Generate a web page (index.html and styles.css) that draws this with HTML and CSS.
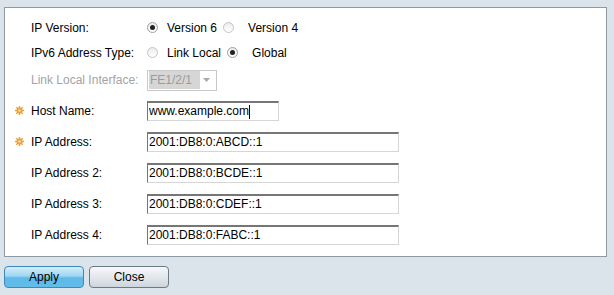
FILE: index.html
```html
<!DOCTYPE html>
<html lang="en">
<head>
    <meta charset="UTF-8">
    <meta name="viewport" content="width=device-width, initial-scale=1.0">
    <title>Add IPv6 DNS Host</title>
    <link rel="stylesheet" href="styles.css">
</head>
<body>
    <form class="panel">
        <div class="row row-short">
            <span class="mark"></span>
            <label class="label">IP Version:</label>
            <div class="control">
                <label class="opt"><input type="radio" name="ipver" checked> Version 6</label>
                <label class="opt"><input type="radio" name="ipver"> Version 4</label>
            </div>
        </div>
        <div class="row row-short">
            <span class="mark"></span>
            <label class="label">IPv6 Address Type:</label>
            <div class="control">
                <label class="opt"><input type="radio" name="addrtype"> Link Local</label>
                <label class="opt"><input type="radio" name="addrtype" checked> Global</label>
            </div>
        </div>
        <div class="row row-mid">
            <span class="mark"></span>
            <label class="label disabled">Link Local Interface:</label>
            <div class="control">
                <div class="select-box">
                    <span class="select-value">FE1/2/1</span>
                    <svg class="select-arrow" width="7" height="4" viewBox="0 0 7 4"><path d="M0 0 L7 0 L3.5 4 Z" fill="#a9a9a9"/></svg>
                </div>
            </div>
        </div>
        <div class="row">
            <span class="mark"><svg width="9" height="9" viewBox="0 0 9 9"><g fill="#eba035"><circle cx="4.5" cy="4.5" r="3"/><rect x="3.8" y="0" width="1.4" height="9"/><rect x="0" y="3.8" width="9" height="1.4"/><rect x="3.8" y="0" width="1.4" height="9" transform="rotate(45 4.5 4.5)"/><rect x="3.8" y="0" width="1.4" height="9" transform="rotate(-45 4.5 4.5)"/></g><circle cx="4.5" cy="4.5" r="1.3" fill="#fbe3b0"/></svg></span>
            <label class="label">Host Name:</label>
            <div class="control"><input class="field field-short" type="text" value="www.example.com"><span class="caret"></span></div>
        </div>
        <div class="row">
            <span class="mark"><svg width="9" height="9" viewBox="0 0 9 9"><g fill="#eba035"><circle cx="4.5" cy="4.5" r="3"/><rect x="3.8" y="0" width="1.4" height="9"/><rect x="0" y="3.8" width="9" height="1.4"/><rect x="3.8" y="0" width="1.4" height="9" transform="rotate(45 4.5 4.5)"/><rect x="3.8" y="0" width="1.4" height="9" transform="rotate(-45 4.5 4.5)"/></g><circle cx="4.5" cy="4.5" r="1.3" fill="#fbe3b0"/></svg></span>
            <label class="label">IP Address:</label>
            <div class="control"><input class="field" type="text" value="2001:DB8:0:ABCD::1"></div>
        </div>
        <div class="row">
            <span class="mark"></span>
            <label class="label">IP Address 2:</label>
            <div class="control"><input class="field" type="text" value="2001:DB8:0:BCDE::1"></div>
        </div>
        <div class="row">
            <span class="mark"></span>
            <label class="label">IP Address 3:</label>
            <div class="control"><input class="field" type="text" value="2001:DB8:0:CDEF::1"></div>
        </div>
        <div class="row">
            <span class="mark"></span>
            <label class="label">IP Address 4:</label>
            <div class="control"><input class="field" type="text" value="2001:DB8:0:FABC::1"></div>
        </div>
    </form>
    <div class="buttons">
        <button type="button" class="btn btn-apply">Apply</button>
        <button type="button" class="btn btn-close">Close</button>
    </div>
</body>
</html>
```

FILE: styles.css
```css
body {
    margin: 0;
    padding: 7px 7px 0 4px;
    background-color: #dbe3eb;
    font-family: "Liberation Sans", Arial, sans-serif;
    font-size: 12px;
    color: #000;
}
.panel {
    width: 601px;
    background-color: #fff;
    border: 1px solid #8f9ba4;
    padding: 7px 0 6px 0;
    box-sizing: content-box;
}
.row {
    display: grid;
    grid-template-columns: 26px 116px 1fr;
    align-items: center;
    height: 31px;
}
.row-short {
    height: 25px;
}
.row-mid {
    height: 30px;
}
.mark {
    display: flex;
    align-items: center;
    padding-left: 10px;
}
.label {
    color: #000;
}
.label.disabled {
    color: #a3a3a3;
}
.control {
    display: flex;
    align-items: center;
    position: relative;
}
.opt {
    display: flex;
    align-items: center;
    margin-right: 6px;
}
.opt input {
    appearance: none;
    -webkit-appearance: none;
    width: 11px;
    height: 11px;
    margin: 0 9px 0 0;
    border: 1px solid #c4c4c4;
    border-radius: 50%;
    background: linear-gradient(#ececec, #ffffff);
    box-sizing: border-box;
    position: relative;
}
.opt + .opt input {
    margin-right: 14px;
}
.opt input:checked {
    border-color: #a0a0a0;
}
.opt input:checked::after {
    content: "";
    position: absolute;
    left: 2px;
    top: 2px;
    width: 5px;
    height: 5px;
    border-radius: 50%;
    background-color: #222;
}
.select-box {
    display: flex;
    align-items: center;
    justify-content: space-between;
    width: 70px;
    height: 21px;
    border: 1px solid #c9c9c9;
    box-sizing: border-box;
    padding: 0 6px 0 1px;
}
.select-value {
    background-color: #d6d6d6;
    color: #9b9b9b;
    padding: 2px 2px 2px 1px;
    width: 48px;
}
.field {
    width: 252px;
    height: 20px;
    box-sizing: border-box;
    border-top: 2px solid #767676;
    border-left: 1px solid #767676;
    border-right: 1px solid #d6d6d6;
    border-bottom: 1px solid #d6d6d6;
    padding: 0 1px;
    margin: 0;
    font-family: "Liberation Sans", Arial, sans-serif;
    font-size: 12px;
    color: #000;
    outline: none;
}
.field-short {
    width: 132px;
}
.caret {
    position: absolute;
    left: 102px;
    top: 4px;
    width: 1px;
    height: 14px;
    background-color: #000;
}
.buttons {
    display: flex;
    gap: 5px;
    margin-top: 9px;
}
.btn {
    width: 80px;
    height: 22px;
    border-radius: 4px;
    font-family: "Liberation Sans", Arial, sans-serif;
    font-size: 12px;
    color: #000;
    padding: 0;
}
.btn-apply {
    border: 1px solid #3f87bb;
    background: linear-gradient(#d4eefb 0%, #9fd6f2 45%, #5fb9e8 55%, #63bde9 100%);
}
.btn-close {
    border: 1px solid #6c7a86;
    background: linear-gradient(#f7f8fa 0%, #e3e8ed 50%, #cdd5dc 100%);
}
```
